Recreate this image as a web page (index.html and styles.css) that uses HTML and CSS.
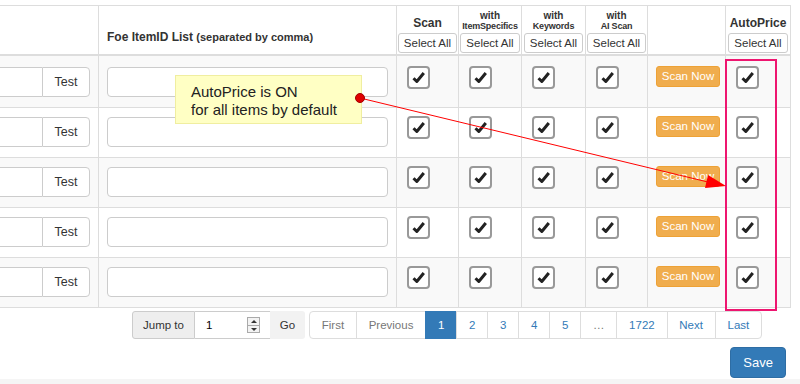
FILE: index.html
```html
<!DOCTYPE html>
<html lang="en">
<head>
  <meta charset="UTF-8">
  <title>Items</title>
  <link rel="stylesheet" href="styles.css">
</head>
<body>
  <div class="page">
    <div class="items-wrap">
      <table class="items">
        <colgroup>
          <col class="c-title"><col class="c-ids"><col class="c-scan"><col class="c-spec">
          <col class="c-kw"><col class="c-ai"><col class="c-now"><col class="c-auto">
        </colgroup>
        <thead>
          <tr>
            <th><div class="th-box"></div></th>
            <th><div class="th-box th-left"><span class="ids-title">Foe ItemID List <small>(separated by comma)</small></span></div></th>
            <th><div class="th-box"><span class="th-title">Scan</span><button class="btn-xs">Select All</button></div></th>
            <th><div class="th-box"><span class="th-sub">with<b>ItemSpecifics</b></span><button class="btn-xs">Select All</button></div></th>
            <th><div class="th-box"><span class="th-sub">with<b>Keywords</b></span><button class="btn-xs">Select All</button></div></th>
            <th><div class="th-box"><span class="th-sub">with<b>AI Scan</b></span><button class="btn-xs">Select All</button></div></th>
            <th><div class="th-box"></div></th>
            <th><div class="th-box"><span class="th-title">AutoPrice</span><button class="btn-xs">Select All</button></div></th>
          </tr>
        </thead>
        <tbody id="rows"></tbody>
      </table>
    </div>

    <div class="pager-row">
      <div class="jump">
        <span class="jump-label">Jump to</span>
        <div class="jump-input">
          <input type="text" value="1">
          <span class="spin"><i class="up"></i><i class="down"></i></span>
        </div>
        <button class="jump-go">Go</button>
      </div>
      <ul class="pagination">
        <li class="off"><a>First</a></li>
        <li class="off"><a>Previous</a></li>
        <li class="active"><a>1</a></li>
        <li><a>2</a></li>
        <li><a>3</a></li>
        <li><a>4</a></li>
        <li><a>5</a></li>
        <li class="off"><a>…</a></li>
        <li><a>1722</a></li>
        <li><a>Next</a></li>
        <li><a>Last</a></li>
      </ul>
    </div>

    <div class="actions"><button class="btn-save">Save</button></div>
    <div class="footer-strip"></div>

    <!-- Подсказка со стрелкой -->
    <div class="note">AutoPrice is ON<br>for all items by default</div>
    <svg class="overlay" width="800" height="384" viewBox="0 0 800 384">
      <rect x="726" y="60" width="50" height="250" fill="none" stroke="#ee1670" stroke-width="2"/>
      <line x1="360" y1="98" x2="712" y2="183" stroke="#ff0000" stroke-width="1"/>
      <polygon points="726,186 705,188 708,175" fill="#ff0000"/>
      <circle cx="360" cy="98" r="4.5" fill="#e00000" stroke="#a00000" stroke-width="1"/>
    </svg>
  </div>

  <script>
    // Строки таблицы: у всех товаров галочки включены
    const check = '<span class="chk"><svg width="19" height="19" viewBox="0 0 19 19"><path d="M4.5 10.2 L7.8 13.5 L14.8 5" fill="none" stroke="#222" stroke-width="3" stroke-linejoin="round"/></svg></span>';
    const rows = document.getElementById('rows');
    for (let i = 0; i < 5; i++) {
      rows.insertAdjacentHTML('beforeend',
        '<tr>' +
        '<td><div class="cell"><div class="test-group"><input type="text"><span class="test-addon">Test</span></div></div></td>' +
        '<td><div class="cell"><input class="ids-input" type="text"></div></td>' +
        '<td><div class="cell">' + check + '</div></td>' +
        '<td><div class="cell">' + check + '</div></td>' +
        '<td><div class="cell">' + check + '</div></td>' +
        '<td><div class="cell">' + check + '</div></td>' +
        '<td><div class="cell"><button class="btn-scan">Scan Now</button></div></td>' +
        '<td><div class="cell">' + check + '</div></td>' +
        '</tr>');
    }
  </script>
</body>
</html>
```

FILE: styles.css
```css
/* Цвета */
:root {
  --border: #ddd;
  --stripe: #f9f9f9;
  --text: #333;
  --link: #337ab7;
  --warn: #f0ad4e;
  --warn-border: #eea236;
}
* { box-sizing:border-box; }
body { margin:0; font-family:'Liberation Sans', Arial, sans-serif; color:var(--text); background:#fff; overflow:hidden; }
.page { position:relative; width:800px; height:384px; padding-top:5px; }

/* Таблица товаров */
.items-wrap { margin-left:-60px; width:850px; }
.items { width:850px; table-layout:fixed; border-collapse:collapse; }
.c-title { width:158px; } .c-ids { width:298px; } .c-scan { width:62px; } .c-spec { width:63px; }
.c-kw { width:64px; } .c-ai { width:62px; } .c-now { width:78px; } .c-auto { width:65px; }
.items th, .items td { border:1px solid var(--border); padding:0; vertical-align:top; }
.items thead th { border-bottom-width:2px; }
.th-box { height:48px; display:flex; flex-direction:column; justify-content:flex-end; align-items:center; padding-bottom:1px; }
.th-left { align-items:flex-start; padding:0 0 9px 8px; }
.ids-title { font-size:12px; font-weight:bold; line-height:15px; }
.ids-title small { font-size:11px; }
.th-title { font-size:12px; font-weight:bold; line-height:15px; margin-bottom:2px; }
.th-sub { font-size:10px; line-height:11px; text-align:center; color:#333; margin-bottom:1px; }
.th-sub b { display:block; font-size:9px; letter-spacing:-0.2px; }
.btn-xs { font-family:inherit; font-size:11.5px; line-height:16px; height:20px; padding:1px 5px; color:#333; background:#fff; border:1px solid #ccc; border-radius:3px; white-space:nowrap; }

.items tbody tr:nth-child(odd) { background:var(--stripe); }
.items td { padding:8px 8px 0; }
.items tbody tr:first-child td { padding-top:10px; }
.cell { height:40px; }
.test-group { display:flex; height:30px; margin-top:1px; }
.test-group input { flex:1; min-width:0; border:1px solid #ccc; border-right:none; border-radius:4px 0 0 4px; background:#fff; }
.test-addon { width:48px; display:flex; align-items:center; justify-content:center; font-size:12.5px; color:#333; border:1px solid #ccc; border-radius:0 4px 4px 0; background:#fff; }
.ids-input { display:block; width:100%; height:30px; margin-top:1px; border:1px solid #ccc; border-radius:4px; background:#fff; }
.chk { display:block; width:23px; height:23px; margin-left:2px; border:2px solid #999; border-radius:4px; background:#fff; }
.chk svg { display:block; }
.btn-scan { font-family:inherit; font-size:11.5px; line-height:15px; height:21px; width:64px; padding:2px 0; color:#fff; background:var(--warn); border:1px solid var(--warn-border); border-radius:3px; white-space:nowrap; }

/* Пагинация */
.pager-row { display:flex; padding-left:132px; margin-top:3px; gap:4px; }
.jump { display:flex; height:28px; font-size:11.5px; }
.jump-label { display:flex; align-items:center; padding:0 10px; background:#eee; border:1px solid #ccc; border-radius:3px 0 0 3px; color:#333; }
.jump-input { position:relative; width:75px; border-top:1px solid #ccc; border-bottom:1px solid #ccc; background:#fff; }
.jump-input input { width:100%; height:100%; border:none; padding:0 0 0 11px; font-family:inherit; font-size:11.5px; background:transparent; outline:none; }
.spin { position:absolute; left:52px; top:5px; width:13px; height:16px; border:1px solid #aaa; background:#f3f3f3; display:flex; flex-direction:column; }
.spin i { flex:1; position:relative; }
.spin .up { border-bottom:1px solid #aaa; }
.spin .up:after, .spin .down:after { content:""; position:absolute; left:3px; border-left:3px solid transparent; border-right:3px solid transparent; }
.spin .up:after { top:2px; border-bottom:3px solid #333; }
.spin .down:after { top:2px; border-top:3px solid #333; }
.jump-go { font-family:inherit; font-size:11.5px; width:35px; border:none; background:#f2f2f2; color:#333; border-radius:0 3px 3px 0; }

.pagination { display:flex; list-style:none; margin:0; padding:0; font-size:11.5px; }
.pagination a { display:block; padding:5px 11.8px; line-height:16px; border:1px solid var(--border); margin-left:-1px; color:var(--link); background:#fff; }
.pagination li:first-child a { margin-left:0; border-radius:4px 0 0 4px; }
.pagination li:last-child a { border-radius:0 4px 4px 0; }
.pagination .off a { color:#777; }
.pagination .active a { background:var(--link); border-color:var(--link); color:#fff; }

.actions { display:flex; justify-content:flex-end; padding-right:14px; margin-top:8px; }
.btn-save { font-family:inherit; font-size:13px; line-height:17px; padding:6px 12px; height:31px; color:#fff; background:var(--link); border:1px solid #2e6da4; border-radius:4px; }
.footer-strip { height:6px; margin-top:1px; background:#f5f5f5; }

/* Подсказка поверх таблицы */
.note { position:absolute; left:175px; top:75px; width:187px; height:49px; padding:7px 0 0 15px; font-size:15px; line-height:18px; color:#222; background:#ffffc4; border:1px solid #f0eea0; }
.overlay { position:absolute; left:0; top:0; pointer-events:none; }
```
